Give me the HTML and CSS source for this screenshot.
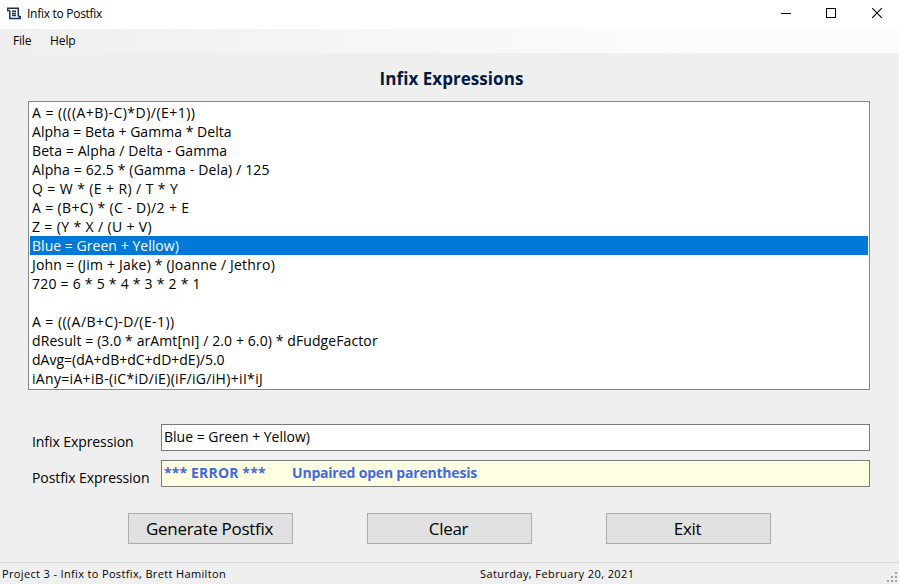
FILE: index.html
```
<!DOCTYPE html>
<html lang="en">
<head>
<meta charset="utf-8">
<title>Infix to Postfix</title>
<link rel="stylesheet" href="styles.css">
</head>
<body>
<div class="window">
  <header class="titlebar">
    <svg class="app-icon" width="14" height="14" viewBox="0 0 14 14" fill="none" stroke="#173258" stroke-width="1.5">
      <path d="M0.500 4.200V1.200H11.300V9.500M2.800 3.500V11.500H13.200V9.500M5 4.200H9M5 6.400H9M5 8.600H9"/>
      <path d="M0 3.600H2.800M11.300 9.500H14"/>
    </svg>
    <span class="title">Infix to Postfix</span>
    <div class="controls">
      <svg width="46" height="27" viewBox="0 0 46 27"><path d="M18 13.5H28" stroke="#000"/></svg>
      <svg width="46" height="27" viewBox="0 0 46 27"><rect x="17.5" y="8.500" width="9" height="9" fill="none" stroke="#000"/></svg>
      <svg width="46" height="27" viewBox="0 0 46 27"><path d="M17.200 8.200L26.800 17.800M26.800 8.200L17.200 17.800" stroke="#000" stroke-width="1.100"/></svg>
    </div>
  </header>
  <nav class="menubar"><span class="menu file">File</span><span class="menu help">Help</span></nav>
  <main class="content">
    <h1 class="heading">Infix Expressions</h1>
    <ul class="list">
      <li class="sp-48">A = ((((A+B)-C)*D)/(E+1))</li>
      <li class="sp-4">Alpha = Beta + Gamma * Delta</li>
      <li class="sp-10">Beta = Alpha / Delta - Gamma</li>
      <li class="sp-14">Alpha = 62.5 * (Gamma - Dela) / 125</li>
      <li class="sp-40">Q = W * (E + R) / T * Y</li>
      <li class="sp-36">A = (B+C) * (C - D)/2 + E</li>
      <li class="sp-36">Z = (Y * X / (U + V)</li>
      <li class="selected sp-4">Blue = Green + Yellow)</li>
      <li class="sp-20">John = (Jim + Jake) * (Joanne / Jethro)</li>
      <li class="sp-24">720 = 6 * 5 * 4 * 3 * 2 * 1</li>
      <li></li>
      <li class="sp-44">A = (((A/B+C)-D/(E-1))</li>
      <li class="sp-10">dResult = (3.0 * arAmt[nI] / 2.0 + 6.0) * dFudgeFactor</li>
      <li>dAvg=(dA+dB+dC+dD+dE)/5.0</li>
      <li class="sp-32">iAny=iA+iB-(iC*iD/iE)(iF/iG/iH)+iI*iJ</li>
    </ul>
    <div class="field infix"><span class="label">Infix Expression</span><div class="box">Blue = Green + Yellow)</div></div>
    <div class="field postfix"><span class="label">Postfix Expression</span><div class="box error"><span class="tag">*** ERROR ***</span><span class="message">Unpaired open parenthesis</span></div></div>
    <div class="buttons">
      <button class="btn generate">Generate Postfix</button>
      <button class="btn">Clear</button>
      <button class="btn">Exit</button>
    </div>
  </main>
  <footer class="status">
    <span class="project">Project 3 - Infix to Postfix, Brett Hamilton</span>
    <span class="date">Saturday, February 20, 2021</span>
    <svg class="grip" width="12" height="12" viewBox="0 0 12 12" fill="#a0a0a0"><path d="M8 0h2v2h-2zM4 4h2v2h-2zM8 4h2v2h-2zM0 8h2v2h-2zM4 8h2v2h-2zM8 8h2v2h-2z"/></svg>
  </footer>
</div>
</body>
</html>
```
FILE: styles.css
```
* { box-sizing: border-box; }
body { margin: 0; font-family: "Open Sans", "Noto Sans", sans-serif; font-size: 14px; color: #000; }
.window { width: 899px; height: 584px; display: flex; flex-direction: column; background: #efefef; overflow: hidden; }
.titlebar { height: 29px; flex: none; display: flex; align-items: flex-start; background: #fff; }
.app-icon { margin: 7px 6px 0 7px; }
.title { font-size: 12px; line-height: 27px; letter-spacing: -0.28px; }
.controls { display: flex; margin-left: auto; margin-right: -2px; transform: translateX(0); }
.controls { margin-right: -2px; }
.menubar { height: 24px; flex: none; display: flex; padding-left: 13px; font-size: 12px; line-height: 24px; background: linear-gradient(to right, #efefef, #fcfcfc 80%, #fcfcfc); }
.file { width: 37px; letter-spacing: -0.2px; }
.help { letter-spacing: -0.1px; }
.content { flex: 1; padding: 0 29px 0 28px; }
.heading { margin: 0; height: 48px; padding-left: 5px; text-align: center; font-size: 17px; line-height: 52px; font-weight: 700; letter-spacing: 0.05px; color: #001a43; }
.list { list-style: none; margin: 0; height: 289px; padding: 1px; border: 1px solid #828790; background: #fff; overflow: hidden; }
.list li { height: 19px; padding: 0 2px; line-height: 20px; white-space: pre; }
.list .selected { background: #0078d7; color: #fff; }
.sp-4 { letter-spacing: 0.04px; }
.sp-10 { letter-spacing: 0.1px; }
.sp-14 { letter-spacing: 0.14px; }
.sp-20 { letter-spacing: 0.2px; }
.sp-24 { letter-spacing: 0.24px; }
.sp-32 { letter-spacing: 0.32px; }
.sp-36 { letter-spacing: 0.36px; }
.sp-40 { letter-spacing: 0.4px; }
.sp-44 { letter-spacing: 0.44px; }
.sp-48 { letter-spacing: 0.48px; }
.field { display: flex; height: 27px; }
.infix { margin-top: 34px; }
.postfix { margin-top: 9px; }
.label { width: 133px; padding-left: 4px; line-height: 36px; white-space: nowrap; letter-spacing: -0.08px; }
.box { flex: 1; border: 1px solid #7a7a7a; padding-left: 2px; background: #fff; line-height: 23px; white-space: pre; }
.error { display: flex; background: #ffffe1; color: #4169e1; font-weight: 700; }
.tag { width: 128px; letter-spacing: 0.15px; }
.message { letter-spacing: -0.2px; }
.buttons { display: flex; gap: 74px; margin: 26px 0 0 100px; }
.btn { width: 165px; height: 31px; padding: 0 2px 0 0; border: 1px solid #adadad; background: #e1e1e1; color: #000; font: 17px/29px "Open Sans", sans-serif; letter-spacing: -0.3px; }
.status { height: 22px; flex: none; display: flex; padding-left: 2px; border-top: 1px solid #d7d7d7; font-size: 11px; line-height: 21px; }
.project { width: 478px; letter-spacing: 0.35px; }
.date { letter-spacing: 0.4px; }
.grip { margin: 9px 0 0 auto; }
```
